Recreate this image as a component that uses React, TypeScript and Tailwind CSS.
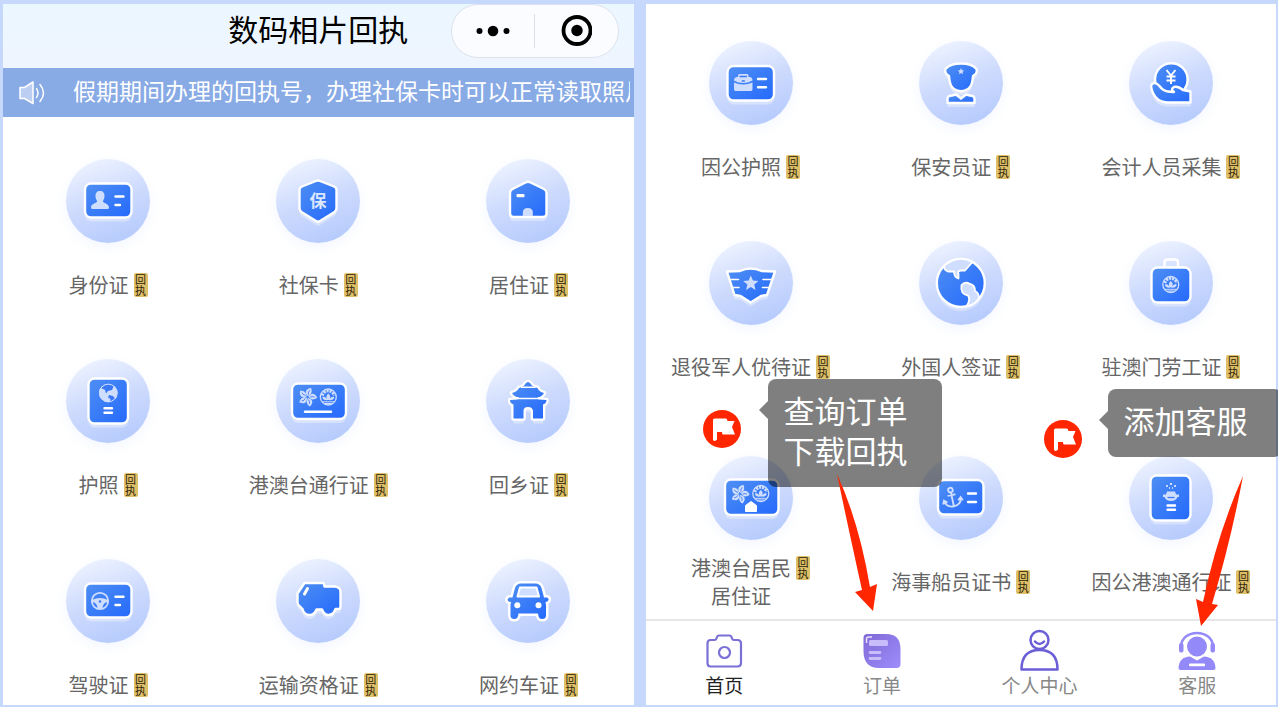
import React from 'react';

type Service = {
  name: string[];
  icon: React.ReactNode;
};

const BLUE = 'url(#icon-blue)';
const PALE = '#cfdefe';

/* White-edged shape with a faint shadow copy under it */
function Plate({ d }: { d: string }) {
  return (
    <>
      <path d={d} transform="translate(0 4)" fill="#fff" opacity="0.35" />
      <path d={d} fill={BLUE} stroke="#fff" strokeWidth="2.4" strokeLinejoin="round" />
    </>
  );
}

function Card({ x, y, w, h }: { x: number; y: number; w: number; h: number }) {
  const box = { x, y, width: w, height: h, rx: 6 };
  return (
    <>
      <rect {...box} transform="translate(0 4)" fill="#fff" opacity="0.35" />
      <rect {...box} fill={BLUE} stroke="#fff" strokeWidth="2.4" />
    </>
  );
}

function Dashes({ d, width = 2.4 }: { d: string; width?: number }) {
  return <path d={d} stroke="#fff" strokeWidth={width} strokeLinecap="round" fill="none" />;
}

function Bauhinia({ x, y }: { x: number; y: number }) {
  return (
    <g transform={`translate(${x} ${y})`}>
      {[10, 82, 154, 226, 298].map((angle) => (
        <g key={angle} transform={`rotate(${angle})`}>
          <path d="M0 -1C-4 -4 -3 -8 2 -9.5C4 -6 3.500 -3 0 -1Z" fill={PALE} />
          <path d="M0.500 -2.500Q-.5 -5 1.200 -7" stroke="#3a78f5" strokeWidth="0.8" fill="none" />
        </g>
      ))}
    </g>
  );
}

function Lotus({ x, y }: { x: number; y: number }) {
  return (
    <g transform={`translate(${x} ${y})`} stroke={PALE} fill="none">
      <circle r="8" strokeWidth="1.3" />
      <path d="M-6 -1.500A6.200 6.200 0 0 1 6 -1.500" strokeWidth="3" strokeDasharray="2.2 0.9" />
      <path d="M0 -3.500C-3 -1 -2 2 0 3C2 2 3 -1 0 -3.500ZM-6 0C-5.500 3 -3 3.500 0 3C3 3.500 5.500 3 6 0C3.500 -.5 2.500 .5 2 1.500C1 0 -1 0 -2 1.500C-2.500 .5 -3.500 -.5 -6 0Z" fill={PALE} stroke="none" />
      <path d="M-6 4.800H6M-3.500 6.500H3.500" strokeWidth="1" />
    </g>
  );
}

function Star({ x, y, r }: { x: number; y: number; r: number }) {
  return (
    <path
      transform={`translate(${x} ${y}) scale(${r})`}
      d="M0 -1L.27 -.36L.95 -.31L.43 .14L.59 .81L0 .45L-.59 .81L-.43 .14L-.95 -.31L-.27 -.36Z"
      fill={PALE}
    />
  );
}

const PAGODA =
  'M36 28Q38 27.500 39.500 24.500Q42 21.500 44.500 24.500Q46 27.500 48.500 28L51.500 29Q53 33 58 34Q56 38 51.500 38.300L52.500 40.500L60.500 41Q60.500 44.500 57 45.500V59.500H47V52Q46.500 48 42 48Q37.500 48 37.500 52V59.500H27.500V45.500Q24 44.500 24 41L32 40.500L33 38.300Q28 38 26 34Q31 33 33 29Z';
const CAR =
  'M29 29Q30.500 24.500 35 24.500H49.500Q54 24.500 55.500 29L58 38.500H61Q63 39 62.500 41Q62 43 59.500 43L60 46V56.500Q60 60 56 60Q52.500 60 52 54.500H32.500Q32 60 28.500 60Q24.500 60 24.500 56.500V46L25 43Q22 43 21.500 41Q21.500 39 23.500 38.500H26.500Z';

const firstServices: Service[] = [
  {
    name: ['身份证'],
    icon: (
      <>
        <Card x={19} y={24.5} w={46.500} h={34} />
        <path d="M34 32C37 32 38.800 34 38.500 37.500C38.300 40 37.500 41 36.800 42.300C37 44 42.800 44.500 43 48.500Q43 50 41.500 50H26.500Q25 50 25 48.500C25.200 44.500 31 44 31.200 42.300C30.500 41 29.700 40 29.500 37.500C29.200 34 31 32 34 32Z" fill={PALE} />
        <Dashes d="M49.500 37.500H57.500M49.500 46H54" />
      </>
    ),
  },
  {
    name: ['社保卡'],
    icon: (
      <>
        <Plate d="M40 22Q42 21 44 22L58 27.500Q60.500 28.500 60.500 31V49Q60.500 51.500 58.500 53L44 62Q42 63.500 40 62L25.500 53Q23.500 51.500 23.500 49V31Q23.500 28.500 26 27.500Z" />
        <text x="42" y="48" textAnchor="middle" fontSize="17" fontWeight="700" fill="#dbe6ff">保</text>
      </>
    ),
  },
  {
    name: ['居住证'],
    icon: (
      <>
        <Plate d="M39.500 23.500Q42 22 44.500 23.500L58 30Q60.500 31.500 60.500 34V54.500Q60.500 58 57 58H27.500Q24 58 24 54.500V34Q24 31.500 26.500 30Z" />
        <rect x="30.500" y="35" width="8" height="3.200" rx="1" fill="#fff" />
        <path d="M36.800 57V53.500Q36.800 49 41.800 49Q46.800 49 46.800 53.500V57Z" fill={PALE} />
      </>
    ),
  },
  {
    name: ['护照'],
    icon: (
      <>
        <Card x={22.500} y={19.500} w={39.500} h={45} />
        <circle cx="42.300" cy="34" r="9.300" fill={PALE} />
        <path d="M35 29L39 31L40 34.500L42 32L46 31L48 26.500Q44 24 39.500 25.200ZM43 36L47 37L49.500 40Q47 43 44 43L44.500 40L42 38.500Z" fill="#3a78f5" />
        <circle cx="42.300" cy="34" r="8.800" fill="none" stroke={PALE} />
        <Dashes d="M38.500 49.300H46M38.500 53.800H46" />
      </>
    ),
  },
  {
    name: ['港澳台通行证'],
    icon: (
      <>
        <Card x={16} y={24.500} w={54} h={35.500} />
        <Bauhinia x={31.500} y={38} />
        <Lotus x={52.300} y={38} />
        <Dashes d="M29 52.800H55" />
      </>
    ),
  },
  {
    name: ['回乡证'],
    icon: (
      <>
        <path d={PAGODA} transform="translate(0 5)" fill="#fff" opacity="0.35" />
        <path d={PAGODA} fill="#fff" stroke="#fff" strokeWidth="4.500" strokeLinejoin="round" />
        <path d={PAGODA} fill={BLUE} />
        <path d="M35 28.300H49.500M32 39.500H53" stroke="#fff" strokeWidth="1.400" />
      </>
    ),
  },
  {
    name: ['驾驶证'],
    icon: (
      <>
        <Card x={19} y={24.500} w={46.500} h={34} />
        <circle cx="34" cy="42" r="8.200" fill="none" stroke={PALE} strokeWidth="1.800" />
        <path d="M26 41Q34 37 42 41V43Q37 43 36.500 49.500H31.500Q31 43 26 43Z" fill={PALE} />
        <circle cx="34" cy="42.500" r="1.200" fill="#3a78f5" />
        <Dashes d="M49.500 37.800H57.500M49.500 46H54" />
      </>
    ),
  },
  {
    name: ['运输资格证'],
    icon: (
      <>
        <Plate d="M28.500 24H46.500Q48 24 48.200 26L48.500 27.500H59Q64.500 28 64.500 33V48Q64.500 50 62.500 50H59.500Q57.500 56 52.500 56Q48 56 46 50.500H40.500Q38.500 56 33.500 56Q28 56 26.500 50L22.500 46Q21.500 45 21.500 43V34.500Z" />
        <Dashes d="M31.500 29.500L28.500 35" width={3} />
      </>
    ),
  },
  {
    name: ['网约车证'],
    icon: (
      <>
        <path d={CAR} fill="#fff" stroke="#fff" strokeWidth="5" strokeLinejoin="round" />
        <path d={CAR} fill={BLUE} />
        <path d="M34 28.500H50.500L53 37.500H31.500Z" fill={PALE} stroke="#fff" strokeWidth="2" strokeLinejoin="round" />
        <circle cx="31.300" cy="46.300" r="3" fill="#fff" />
        <circle cx="52.500" cy="46.300" r="3" fill="#fff" />
      </>
    ),
  },
];

const secondServices: Service[] = [
  {
    name: ['因公护照'],
    icon: (
      <>
        <Card x={18.500} y={25} w={46.500} h={34.500} />
        <path d="M29 36V34.500Q29 33 30.500 33H38Q39.500 33 39.500 34.500V36H41Q43.500 36.500 43.500 39.500Q39 42 34.200 42Q29 42 25 39.500Q25 36.500 27.500 36ZM25 41.500Q29 43.500 34.200 43.500Q39 43.500 43.500 41.500V48Q43.500 50 42 50H26.500Q25 50 25 48Z" fill={PALE} />
        <path d="M30.500 35.500H38M32.800 40H35.800" stroke="#3a78f5" strokeWidth="1.500" />
        <Dashes d="M49 38H57M49 46.300H57" />
      </>
    ),
  },
  {
    name: ['保安员证'],
    icon: (
      <>
        <Plate d="M30 35Q25 32 26.500 28Q31 22.500 42 22.500Q53 22.500 57.500 28Q59 32 54 35Q53.500 45 49 48Q42 52.500 35 48Q30.500 45 30 35Z" />
        <Plate d="M28.500 62V58Q28.500 54.500 33 54.500L37 53.500L42 57.500L47 53.500L51 54.500Q55.500 54.500 55.500 58V62Z" />
        <Star x={42} y={30.500} r={3.500} />
      </>
    ),
  },
  {
    name: ['会计人员采集'],
    icon: (
      <>
        <circle cx="42.300" cy="38.500" r="16.300" fill={BLUE} stroke="#fff" strokeWidth="2.400" />
        <path d="M37.500 29L42 34.500L46.500 29M42 34.500V43M37.500 35.500H46.500M37.500 39.500H46.500" stroke="#fff" strokeWidth="1.900" fill="none" />
        <Plate d="M23 43Q26 40.500 30 44.500Q34 50 39 50.500L45 51Q41 48 45 46Q49 45 54 49L61.500 50.500V61.500H38Q28 61 24 52Q21 45 23 43Z" />
      </>
    ),
  },
  {
    name: ['退役军人优待证'],
    icon: (
      <>
        <Plate d="M18 30.500L31 30Q41.700 25 52.500 30L66 30.500L58 54L52 55L41.700 61.500L31.500 55L25.500 54Z" />
        <Dashes d="M21 38.500H29.500M23.500 46.500H30M54 38.500H62.500M53.500 46.500H60" width={1.600} />
        <Star x={41.800} y={42.500} r={8} />
      </>
    ),
  },
  {
    name: ['外国人签证'],
    icon: (
      <>
        <circle cx="41.800" cy="46" r="24" fill="#fff" opacity="0.35" />
        <circle cx="41.800" cy="42" r="24" fill={BLUE} stroke="#fff" strokeWidth="2.400" />
        <g fill={PALE} stroke="#fff" strokeWidth="1.800" strokeLinejoin="round">
          <path d="M25 25Q25 29 29 30.500H35Q35 36 39.500 37.500V33Q38 30 42 29.500H46L53.500 21Q39 13 25 25Z" />
          <path d="M42.500 44Q46 40 51 43Q56 44 56 50Q60 52 60 57Q55 65 47.500 65Q52 59 49 54.500Q41 53 42.500 44Z" />
        </g>
      </>
    ),
  },
  {
    name: ['驻澳门劳工证'],
    icon: (
      <>
        <path d="M35.500 26V21.500Q35.500 18.500 38.500 18.500H46Q49 18.500 49 21.500V26" fill="none" stroke="#fff" strokeWidth="2.400" />
        <Card x={22.500} y={26.500} w={39} h={35} />
        <Lotus x={41.800} y={43.500} />
      </>
    ),
  },
];

const lastServices: Service[] = [
  {
    name: ['港澳台居民', '居住证'],
    icon: (
      <>
        <Card x={16} y={23.500} w={53.500} h={35.500} />
        <Bauhinia x={31} y={38} />
        <Lotus x={51.800} y={37.500} />
        <path d="M36.500 55.500V49.500L42 45.500L47.500 49.500V55.500Z" fill="#fff" stroke="#fff" strokeLinejoin="round" />
      </>
    ),
  },
  {
    name: ['海事船员证书'],
    icon: (
      <>
        <Card x={19} y={24} w={45.500} h={34.500} />
        <g transform="translate(33 41.500) rotate(-12)" stroke={PALE} strokeWidth="1.900" fill="none">
          <circle cx="0" cy="-7.500" r="2.300" />
          <path d="M0 -5V9M-4 -2.500H4M-8.500 2.500Q-7 9 0 9Q7 9 8.500 2.500M-10 5L-8.500 1.500L-5.500 4M10 5L8.500 1.500L5.500 4" />
        </g>
        <Dashes d="M49 37.500H57M49 46H57" />
      </>
    ),
  },
  {
    name: ['因公港澳通行证'],
    icon: (
      <>
        <Card x={21.500} y={19.500} w={40} h={45} />
        <path d="M34 38.500H37L38 35.500H46L47 38.500H50V41H48.500Q47 45 42 45Q37 45 35.500 41H34Z" fill={PALE} />
        <path d="M38.500 41.500H45.500" stroke="#3a78f5" strokeWidth="1.300" />
        <g fill="#fff">
          <circle cx="42" cy="28" r="1" />
          <circle cx="38" cy="30" r="0.900" />
          <circle cx="46" cy="30" r="0.900" />
          <circle cx="40.500" cy="32" r="0.700" />
          <circle cx="43.500" cy="32" r="0.700" />
        </g>
        <Dashes d="M38.500 49.500H46M38.500 53.800H46" />
      </>
    ),
  },
];

function ServiceItem({ service, tall }: { service: Service; tall?: boolean }) {
  return (
    <button type="button" className="flex flex-col items-center">
      <span className="block size-[84px] rounded-full bg-linear-160 from-[#f3f7ff] via-[#cddafd] to-[#b0c7fd] shadow-[0_4px_12px_rgba(190,210,255,0.2)]">
        <svg viewBox="0 0 84 84" className="size-full" aria-hidden="true">{service.icon}</svg>
      </span>
      <span className={tall ? 'mt-3.5 flex h-14 items-center' : 'mt-7 flex h-7 items-center'}>
        <span className="flex items-start gap-[5px]">
          <span className="text-[20px] leading-7 whitespace-nowrap text-[#666]">
            {service.name.map((line) => (
              <span key={line} className="block">{line}</span>
            ))}
          </span>
          <span className="mt-0.5 flex h-6 w-3.5 items-center justify-center rounded-xs bg-[#dfc068] text-[11px] leading-[14px] text-[#2b2209] [writing-mode:vertical-rl]">
            回执
          </span>
        </span>
      </span>
    </button>
  );
}

function ServiceGrid({ services, tall }: { services: Service[]; tall?: boolean }) {
  return (
    <div className="grid grid-cols-3 gap-y-[60px]">
      {services.map((service) => (
        <ServiceItem key={service.name[0]} service={service} tall={tall} />
      ))}
    </div>
  );
}

function Callout({ lines }: { lines: string[] }) {
  return (
    <div className="relative rounded-lg bg-black/50 pt-[11px] pr-[34px] pb-[17px] pl-4 text-[31px] leading-10 whitespace-nowrap text-white">
      <svg viewBox="0 0 9 18" className="absolute top-[22px] right-full h-[18px] w-[9px]" aria-hidden="true">
        <path d="M9 0V18L0 9Z" fill="#000" fillOpacity="0.5" />
      </svg>
      {lines.map((line) => (
        <p key={line}>{line}</p>
      ))}
    </div>
  );
}

function Flag() {
  return (
    <svg viewBox="0 0 38 38" className="size-[38px]" aria-hidden="true">
      <circle cx="19" cy="19" r="19" fill="#ff2600" />
      <path d="M10 10Q10 8.500 11.500 8.500H23Q24 8.500 24.500 11H31.500L29 17L32 24.500H20Q19 24.500 19 22H14V29.500Q12 32 10 30Z" fill="#fff" />
    </svg>
  );
}

const tabs = [
  {
    label: '首页',
    active: true,
    icon: (
      <g fill="none" stroke="#7a70d6" strokeWidth="2.200" strokeLinejoin="round">
        <path d="M7.500 11H11.500Q13 11 13.500 9.500L14 8Q14.500 6.500 16 6.500H26.500Q28 6.500 28.500 8L29 9.500Q29.500 11 31 11H34.500Q38 11 38 14.500V34Q38 37.500 34.500 37.500H7.500Q4.500 37.500 4.500 34V14.500Q4.500 11 7.500 11Z" />
        <circle cx="21.500" cy="23.500" r="5.500" />
      </g>
    ),
  },
  {
    label: '订单',
    icon: (
      <>
        <path d="M2.500 9Q2.500 5 6.500 5H25Q39.500 5 39.500 20V35Q39.500 39 35.500 39H18Q2.500 39 2.500 22Z" fill="url(#order-purple)" />
        <rect x="8" y="11" width="19" height="6" rx="1.500" fill="#c9bcfa" />
        <path d="M9 23.500H19M9 29.500H19" stroke="#c9bcfa" strokeWidth="2.800" strokeLinecap="round" />
        <path d="M5.500 14V10Q5.500 8 8 8H11" stroke="#e9e3ff" strokeWidth="1.500" fill="none" />
      </>
    ),
  },
  {
    label: '个人中心',
    icon: (
      <g fill="none" stroke="#6a5fd6" strokeWidth="2.500">
        <circle cx="20.500" cy="11" r="9" />
        <path d="M16 12.500Q20.500 17.500 25 12.500" strokeLinecap="round" />
        <path d="M2.500 40.500Q2.500 21 20.500 21Q38.500 21 38.500 40.500Z" strokeLinejoin="round" />
      </g>
    ),
  },
  {
    label: '客服',
    icon: (
      <g fill="#9489f8">
        <circle cx="21" cy="17.500" r="10" />
        <path d="M5 17C6 -.5 36 -.5 37 17" fill="none" stroke="#9489f8" strokeWidth="2.500" />
        <rect x="3" y="14" width="4.500" height="9.500" rx="2" />
        <rect x="34.500" y="14" width="4.500" height="9.500" rx="2" />
        <path d="M2.500 39Q3 28 14 27.500L21 31.500L28 27.500Q39 28 39.500 39Q39.500 41 37.500 41H4.500Q2.500 41 2.500 39Z" />
        <rect x="13" y="34.500" width="16" height="2.800" rx="1" fill="#fff" />
      </g>
    ),
  },
];

export default function App() {
  return (
    <div className="flex min-h-screen gap-3 overflow-hidden bg-[#c6d9fd] pt-1 pr-0.5 pb-0.5 pl-[3px] font-['Noto_Sans_CJK_SC',sans-serif]">
      {/* Gradients shared by the icons */}
      <svg className="absolute size-0" aria-hidden="true">
        <defs>
          <linearGradient id="icon-blue" x1="0" y1="0" x2="1" y2="1">
            <stop offset="0" stopColor="#4f8ff3" />
            <stop offset="1" stopColor="#2469fc" />
          </linearGradient>
          <linearGradient id="order-purple" x1="0" y1="0" x2="1" y2="1">
            <stop offset="0" stopColor="#8069d6" />
            <stop offset="1" stopColor="#9d8dfb" />
          </linearGradient>
        </defs>
      </svg>

      {/* Left screen */}
      <section className="min-w-0 flex-1 bg-white">
        <header className="grid h-16 grid-cols-[1fr_auto_1fr] bg-linear-to-b from-[#ebf7ff] to-[#eff5ff]">
          <h1 className="col-start-2 text-[30px] leading-12 whitespace-nowrap text-black">数码相片回执</h1>
          <div className="flex justify-end pr-[15px]">
            <div className="flex h-[54px] w-[168px] items-center rounded-full border border-[#dde2ec] bg-[#fafcff]">
              <button type="button" aria-label="更多" className="flex flex-1 items-center justify-center">
                <svg viewBox="0 0 34 12" className="h-3 w-[34px]">
                  <circle cx="3.500" cy="6" r="3" />
                  <circle cx="17" cy="6" r="5.300" />
                  <circle cx="30.500" cy="6" r="3" />
                </svg>
              </button>
              <span className="h-[34px] w-px bg-[#dde0e6]" />
              <button type="button" aria-label="关闭" className="flex flex-1 items-center justify-center">
                <svg viewBox="0 0 32 32" className="size-8">
                  <circle cx="17" cy="15.500" r="13.500" fill="none" stroke="#000" strokeWidth="3.800" />
                  <circle cx="17" cy="15.500" r="5.700" />
                </svg>
              </button>
            </div>
          </div>
        </header>

        <div className="flex h-[49px] items-center bg-[#88aae5] pr-1 pl-4">
          <svg viewBox="0 0 26 24" className="h-6 w-[26px] shrink-0" fill="none" stroke="#fff" strokeWidth="1.500" aria-hidden="true">
            <path d="M1 6.500H5.500L14 1V22.500L5.500 17.500H1Z" fill="#bccff3" strokeLinejoin="round" />
            <path d="M17.500 7.500Q20.500 12 17.500 16.500M21 3.500Q28 12 21 20.500" strokeLinecap="round" />
          </svg>
          <p className="ml-7 min-w-0 flex-1 overflow-hidden pb-1.5 text-[23px] leading-8 whitespace-nowrap text-white">
            假期期间办理的回执号，办理社保卡时可以正常读取照片
          </p>
        </div>

        <div className="pt-[42px] pb-1.5">
          <ServiceGrid services={firstServices} />
        </div>
      </section>

      {/* Right screen */}
      <section className="relative flex min-w-0 flex-1 flex-col bg-white">
        <div className="flex flex-1 flex-col gap-[75px] pt-[37px] pb-2">
          <ServiceGrid services={secondServices} />
          <ServiceGrid services={lastServices} tall />
        </div>

        <nav className="grid h-[86px] grid-cols-4 border-t-2 border-[#e6e6e6]">
          {tabs.map((tab) => (
            <a key={tab.label} href="#" className="flex flex-col items-center pt-2">
              <svg viewBox="0 0 42 42" className="size-[42px]" aria-hidden="true">{tab.icon}</svg>
              <span className={tab.active ? 'text-[19px] leading-7 text-[#222]' : 'text-[19px] leading-7 text-[#888]'}>
                {tab.label}
              </span>
            </a>
          ))}
        </nav>

        {/* Guide marks laid over the screen */}
        <div className="absolute top-[406px] left-[57px]"><Flag /></div>
        <div className="absolute top-[375px] left-[122px]"><Callout lines={['查询订单', '下载回执']} /></div>
        <div className="absolute top-[416px] left-[398px]"><Flag /></div>
        <div className="absolute top-[385px] left-[462px]"><Callout lines={['添加客服']} /></div>
        <svg viewBox="0 0 46 140" className="pointer-events-none absolute top-[468px] left-[188px] h-[140px] w-[46px]" aria-hidden="true">
          <path d="M3 2Q25 50 36 115L43 112L39 139L21 120L28 118Q13 50 3 2Z" fill="#ff2600" />
        </svg>
        <svg viewBox="0 0 50 152" className="pointer-events-none absolute top-[471px] left-[549px] h-[152px] w-[50px]" aria-hidden="true">
          <path d="M48 1Q36 65 17 129L23 130L6 151L1 124L8 127Q22 60 48 1Z" fill="#ff2600" />
        </svg>
      </section>
    </div>
  );
}
